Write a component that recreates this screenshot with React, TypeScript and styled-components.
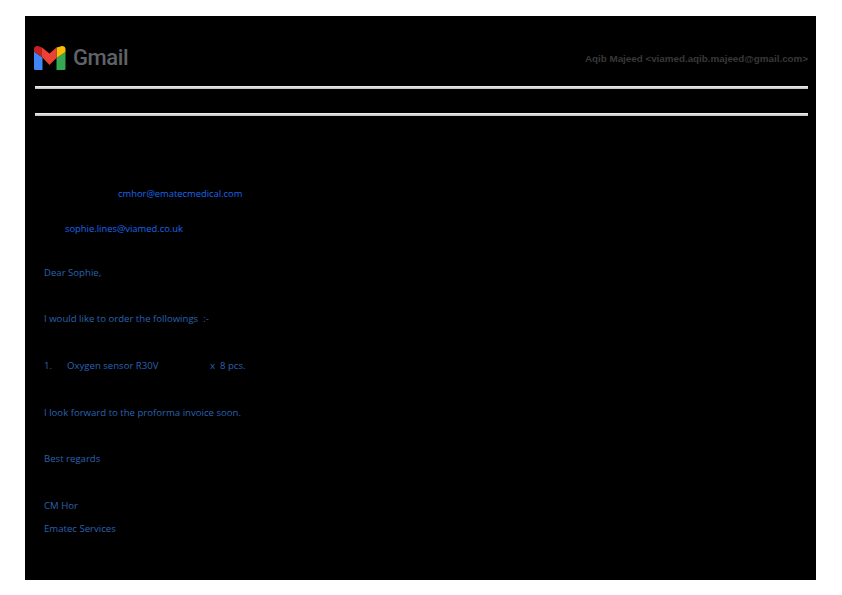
import React from "react";
import styled, { createGlobalStyle } from "styled-components";

const GlobalStyle = createGlobalStyle`
  html, body {
    margin: 0;
    padding: 0;
    background: #fff;
  }
`;

const Page = styled.div`
  width: 842px;
  height: 595px;
  padding: 16px 26px 15px 25px;
  box-sizing: border-box;
  overflow: hidden;
`;

const Sheet = styled.main`
  height: 564px;
  background: #000;
  padding: 30px 8px 0 10px;
  box-sizing: border-box;
  font-family: "Open Sans", "Noto Sans", sans-serif;
`;

const Header = styled.header`
  height: 24px;
  display: flex;
  align-items: center;
  justify-content: space-between;
  margin-left: -1px;
`;

const Brand = styled.div`
  display: flex;
  align-items: center;
  gap: 7px;
`;

const Wordmark = styled.span`
  font-family: Roboto, "Liberation Sans", sans-serif;
  font-size: 22px;
  line-height: 24px;
  font-weight: 500;
  letter-spacing: -0.4px;
  color: #5f6368;
`;

const Account = styled.div`
  padding-top: 1px;
  font-family: "Liberation Sans", Arial, sans-serif;
  font-size: 9.8px;
  font-weight: 700;
  color: #383838;
  white-space: nowrap;
`;

const Rule = styled.hr<{ $top: number }>`
  height: 3px;
  margin: ${(p) => p.$top}px 0 0;
  border: 0;
  background: linear-gradient(#f2f2f2, #bdbdbd);
`;

const Message = styled.section`
  padding: 72px 0 0 9px;
`;

const Line = styled.p<{ $top?: number; $indent?: number }>`
  margin: ${(p) => p.$top ?? 0}px 0 0 ${(p) => p.$indent ?? 0}px;
  height: 12px;
  font-size: 9.6px;
  line-height: 12px;
  color: #2a62b0;
  white-space: pre;
`;

const MailLink = styled.a`
  font-size: 9.4px;
  color: #1a66ea;
  text-decoration: none;
`;

const Marker = styled.span`
  display: inline-block;
  width: 23px;
`;

const Quantity = styled.span`
  display: inline-block;
  margin-left: 51.5px;
`;

const GmailLogo = () => (
  <svg width="32" height="24" viewBox="0 0 32 24" aria-hidden="true">
    <path fill="#4285f4" d="M0 5.500V22.500A1.500 1.500 0 0 0 1.500 24H8.500V11.500L0 5.500z" />
    <path fill="#34a853" d="M22.500 12v12h7.500a1.500 1.500 0 0 0 1.500-1.500V6l-9 6z" />
    <path fill="#fbbc04" d="M22.500 1.500V12l9-6V3C31.500.8 29-.6 26.500.4l-4 1.100z" />
    <path fill="#ea4335" d="M8 11V1.500L15.500 7.500 22.500 1.500V12L15.500 19 8 11z" />
    <path fill="#c5221f" d="M0 3v2.500l8 5.500V1.500L5 .4C2.500-.6 0 .8 0 3z" />
  </svg>
);

export default function App() {
  return (
    <>
      <GlobalStyle />
      <Page>
        <Sheet>
          <Header>
            <Brand>
              <GmailLogo />
              <Wordmark>Gmail</Wordmark>
            </Brand>
            <Account>Aqib Majeed &lt;viamed.aqib.majeed@gmail.com&gt;</Account>
          </Header>
          <Rule $top={16} />
          <Rule $top={24} />
          <Message>
            <Line $indent={74}>
              <MailLink href="#">cmhor@ematecmedical.com</MailLink>
            </Line>
            <Line $top={23} $indent={21}>
              <MailLink href="#">sophie.lines@viamed.co.uk</MailLink>
            </Line>
            <Line $top={32}>Dear Sophie,</Line>
            <Line $top={34}>I would like to order the followings  :-</Line>
            <Line $top={35}>
              <Marker>1.</Marker>Oxygen sensor R30V<Quantity>x  8 pcs.</Quantity>
            </Line>
            <Line $top={35}>I look forward to the proforma invoice soon.</Line>
            <Line $top={34}>Best regards</Line>
            <Line $top={35}>CM Hor</Line>
            <Line $top={11}>Ematec Services</Line>
          </Message>
        </Sheet>
      </Page>
    </>
  );
}
